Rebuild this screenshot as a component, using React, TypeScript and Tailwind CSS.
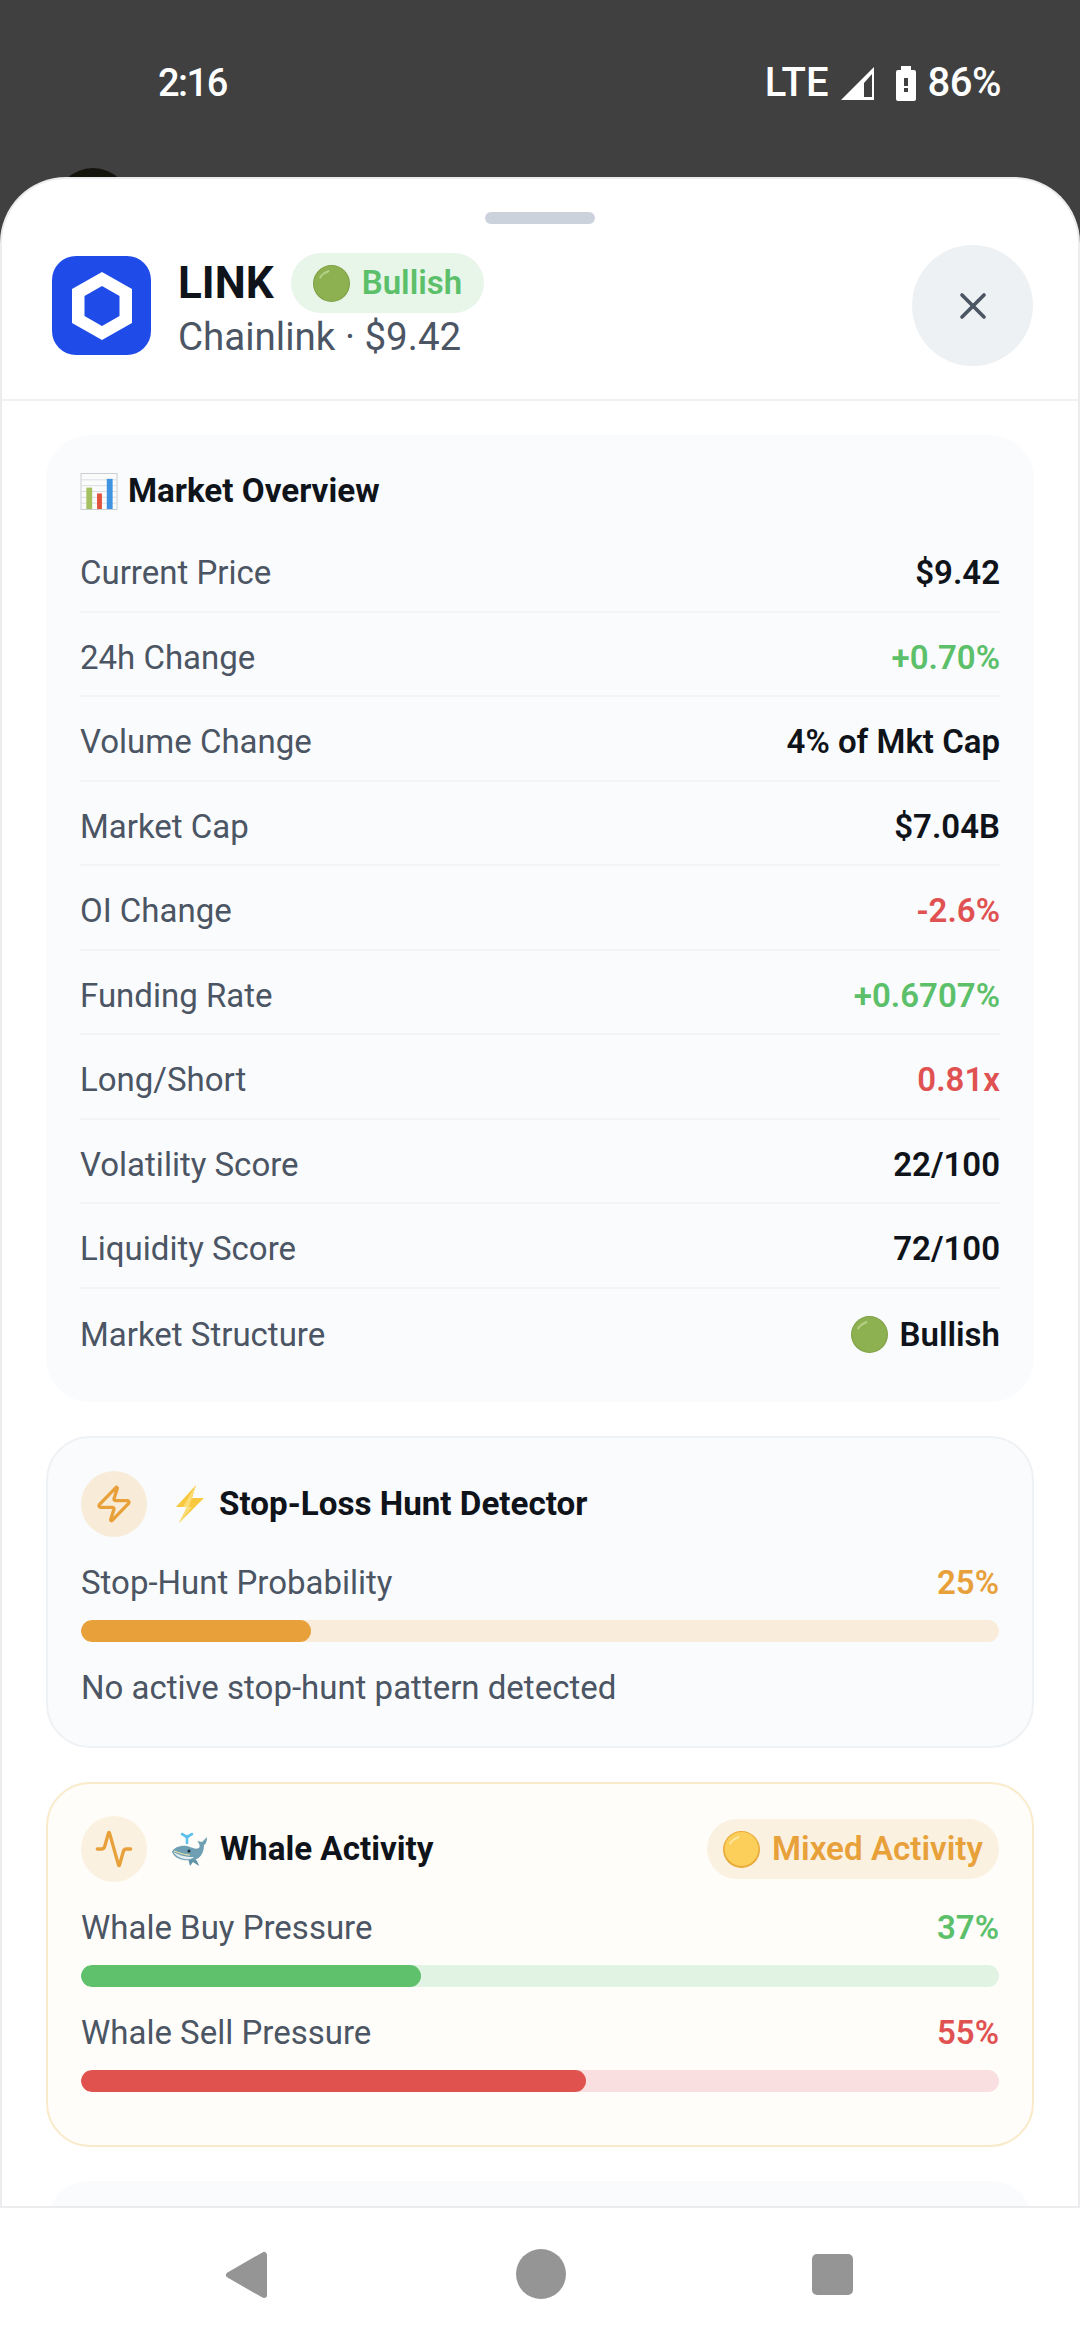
import { Activity, X, Zap } from "lucide-react";

const rows = [
  { label: "Current Price", value: "$9.42", color: "text-[#0f131a]" },
  { label: "24h Change", value: "+0.70%", color: "text-[#5cc06b]" },
  { label: "Volume Change", value: "4% of Mkt Cap", color: "text-[#0f131a]" },
  { label: "Market Cap", value: "$7.04B", color: "text-[#0f131a]" },
  { label: "OI Change", value: "-2.6%", color: "text-[#e05252]" },
  { label: "Funding Rate", value: "+0.6707%", color: "text-[#5cc06b]" },
  { label: "Long/Short", value: "0.81x", color: "text-[#e05252]" },
  { label: "Volatility Score", value: "22/100", color: "text-[#0f131a]" },
  { label: "Liquidity Score", value: "72/100", color: "text-[#0f131a]" },
];

function GreenDot() {
  return (
    <svg width="37" height="37" viewBox="0 0 36 36" className="shrink-0">
      <circle cx="18" cy="18" r="18" fill="#7f9f45" />
      <circle cx="18" cy="18" r="17" fill="#8db150" />
      <path d="M7 12c2-3 5-5 8-6" stroke="#b5cf86" strokeWidth="2" fill="none" strokeLinecap="round" />
    </svg>
  );
}

function YellowDot() {
  return (
    <svg width="37" height="37" viewBox="0 0 36 36" className="shrink-0">
      <circle cx="18" cy="18" r="18" fill="#e8a93a" />
      <circle cx="18" cy="17.5" r="16.5" fill="#fbcf5a" />
      <path d="M7 12c2-3 5-5 8-6" stroke="#fde59c" strokeWidth="2" fill="none" strokeLinecap="round" />
    </svg>
  );
}

function ChartEmoji() {
  return (
    <svg width="38" height="37" viewBox="0 0 38 38" className="shrink-0">
      <rect x="0.5" y="0.5" width="37" height="37" fill="#fbfbfb" stroke="#c9ced3" />
      <path d="M1 7h36M1 13h36M1 19h36M1 25h36M1 31h36" stroke="#d9dde1" strokeWidth="1" />
      <rect x="6" y="15" width="6" height="22" fill="#a5c15f" />
      <rect x="17" y="21" width="5" height="16" fill="#e0523c" />
      <rect x="27" y="6" width="6" height="31" fill="#3f93e0" />
    </svg>
  );
}

function BoltEmoji() {
  return (
    <svg width="30" height="38" viewBox="0 0 30 38" className="shrink-0">
      <path d="M21 0 1 22h11L4 38 29 13H17Z" fill="#f8c93e" />
      <path d="M21 0 8 22h4L4 38 17 22h-3Z" fill="#fbdd78" />
    </svg>
  );
}

function WhaleEmoji() {
  return (
    <svg width="38" height="38" viewBox="0 0 38 38" className="shrink-0">
      {/* spout */}
      <path d="M16 13V6M16 8c-1-2-3-3-5-4M16 8c1-2 3-3 5-4" stroke="#5cc1ec" strokeWidth="2.6" fill="none" strokeLinecap="round" />
      {/* fin */}
      <path d="M17 28l2 8 3-4 6 4c-1-4-3-7-6-9Z" fill="#5f93a8" />
      {/* body and tail */}
      <path d="M1 22C3 17 10 15 16 16c4 1 8 4 12 2 1-2 1-3-1-6l-1-1 5 1 5-5c0 4-1 7-3 8 0 9-5 15-12 15C12 31 4 29 1 22Z" fill="#6f9fb3" />
      {/* belly */}
      <path d="M2 22c6 3 12 5 21 5-4 4-15 3-21-5Z" fill="#e4eef0" />
      <path d="M3 21c6 2 10 4 16 4" stroke="#e9e0a8" strokeWidth="1.200" fill="none" />
      <circle cx="18" cy="21" r="1.500" fill="#1c2b33" />
    </svg>
  );
}

function ProgressRow({
  label,
  value,
  width,
  text,
  fill,
  track,
}: {
  label: string;
  value: string;
  width: string;
  text: string;
  fill: string;
  track: string;
}) {
  return (
    <div>
      <div className="flex h-[46px] items-center justify-between">
        <span className="text-[33px] text-[#4b5563]">{label}</span>
        <span className={`text-[33px] font-semibold ${text}`}>{value}</span>
      </div>
      <div className={`mt-[14px] h-[22px] overflow-hidden rounded-full ${track}`}>
        <div className={`h-full rounded-full ${width} ${fill}`} />
      </div>
    </div>
  );
}

export default function App() {
  return (
    <div className="relative flex h-[2340px] w-[1080px] flex-col overflow-hidden bg-[#404040] font-['Roboto',sans-serif]">
      {/* background coin peeking over the sheet */}
      <div className="absolute left-[55px] top-[168px] h-[76px] w-[76px] rounded-full bg-[#14140c]" />

      {/* Status bar */}
      <div className="relative flex h-[177px] shrink-0 items-start justify-between pl-[158px] pr-[79px] pt-[60px] text-white">
        <span className="text-[38px] font-medium leading-[46px] tracking-[-1.5px]">2:16</span>
        <div className="flex items-center">
          <span className="text-[40px] font-medium leading-[46px]">LTE</span>
          <svg width="34" height="35" viewBox="0 0 34 35" className="ml-[12px]">
            <path d="M33 1v33H0Z" fill="#fff" />
            <path d="M23 17l8-9v23h-8Z" fill="#404040" />
          </svg>
          <svg width="20" height="35" viewBox="0 0 20 35" className="ml-[21px]">
            <path d="M5 0h10v4h3a2 2 0 0 1 2 2v27a2 2 0 0 1-2 2H2a2 2 0 0 1-2-2V6a2 2 0 0 1 2-2h3Z" fill="#fff" />
            <path d="M8 12h4v8h-4ZM8 22h4v4h-4Z" fill="#404040" />
          </svg>
          <span className="ml-[12px] text-[40px] font-medium leading-[46px] tracking-[-0.5px]">86%</span>
        </div>
      </div>

      {/* Sheet */}
      <div className="relative flex min-h-0 flex-1 flex-col overflow-hidden rounded-t-[66px] border-x-2 border-t-2 border-[#ececee] bg-white">
        <div className="mx-auto mt-[33px] h-[12px] w-[110px] shrink-0 rounded-full bg-[#cbd2db]" />

        {/* Header */}
        <div className="flex h-[177px] shrink-0 items-start justify-between border-b-2 border-[#f0f1f3] pl-[50px] pr-[45px]">
          <div className="flex">
            <div className="mt-[32px] flex h-[99px] w-[99px] items-center justify-center rounded-[24px] bg-[#1f4ce8]">
              <svg width="60" height="68" viewBox="0 0 60 68">
                <path fillRule="evenodd" d="M30 0 60 17v34L30 68 0 51V17ZM30 14 12.500 24v20L30 54l17.500-10V24Z" fill="#fff" />
              </svg>
            </div>
            <div className="ml-[27px] mt-[29px]">
              <div className="flex items-center">
                <span className="text-[44px] font-bold leading-[60px] text-[#0f131a]">LINK</span>
                <span className="ml-[17px] flex h-[60px] items-center gap-[12px] rounded-full bg-[#e7f6e9] px-[22px] text-[33px] font-semibold text-[#5cc06b]">
                  <GreenDot />
                  Bullish
                </span>
              </div>
              <div className="text-[38.500px] leading-[48px] text-[#4b5563]">Chainlink · $9.42</div>
            </div>
          </div>
          <div className="mt-[21px] flex h-[121px] w-[121px] items-center justify-center rounded-full bg-[#eef1f4]">
            <X size={44} strokeWidth={2} className="text-[#4b5563]" />
          </div>
        </div>

        {/* Scroll content */}
        <div className="flex min-h-0 flex-1 flex-col gap-[34px] overflow-hidden px-[44px] pt-[34px]">
          <div className="shrink-0 rounded-[44px] bg-[#fafbfd] px-[34px] pb-[29px] pt-[33px]">
            <div className="flex h-[46px] items-center gap-[10px]">
              <ChartEmoji />
              <span className="text-[33.200px] font-bold text-[#0f131a]">Market Overview</span>
            </div>
            <div className="mt-[14px]">
              {rows.map((row) => (
                <div
                  key={row.label}
                  className="flex h-[84.500px] items-center justify-between border-b-2 border-[#f3f4f7] pt-[7px]"
                >
                  <span className="text-[33px] text-[#4b5563]">{row.label}</span>
                  <span className={`text-[33px] font-semibold ${row.color}`}>{row.value}</span>
                </div>
              ))}
              <div className="flex h-[84.500px] items-center justify-between pt-[7px]">
                <span className="text-[33px] text-[#4b5563]">Market Structure</span>
                <span className="flex items-center gap-[12px] text-[33px] font-semibold text-[#0f131a]">
                  <GreenDot />
                  Bullish
                </span>
              </div>
            </div>
          </div>

          <div className="shrink-0 rounded-[44px] border-2 border-[#eff2f5] bg-[#fafbfd] px-[33px] pb-[35px] pt-[33px]">
            <div className="flex items-center">
              <div className="flex h-[66px] w-[66px] items-center justify-center rounded-full bg-[#f8ecd9]">
                <Zap size={40} strokeWidth={2} className="text-[#e8a13a]" />
              </div>
              <div className="ml-[28px] flex items-center gap-[14px]">
                <BoltEmoji />
                <span className="text-[33.200px] font-bold text-[#0f131a]">Stop-Loss Hunt Detector</span>
              </div>
            </div>
            <div className="mt-[23px]">
              <ProgressRow
                label="Stop-Hunt Probability"
                value="25%"
                width="w-1/4"
                text="text-[#e8a13a]"
                fill="bg-[#e8a13a]"
                track="bg-[#f9ecdb]"
              />
            </div>
            <div className="mt-[23px] text-[33px] leading-[46px] text-[#4b5563]">No active stop-hunt pattern detected</div>
          </div>

          <div className="shrink-0 rounded-[44px] border-2 border-[#f9eaca] bg-[#fffdf9] px-[33px] pb-[53px] pt-[32px]">
            <div className="flex items-center justify-between">
              <div className="flex items-center">
                <div className="flex h-[66px] w-[66px] items-center justify-center rounded-full bg-[#fbf1e0]">
                  <Activity size={40} strokeWidth={2} className="text-[#e8a13a]" />
                </div>
                <div className="ml-[24px] flex items-center gap-[11px]">
                  <WhaleEmoji />
                  <span className="text-[33.200px] font-bold text-[#0f131a]">Whale Activity</span>
                </div>
              </div>
              <span className="flex h-[60px] items-center gap-[12px] rounded-full bg-[#fbf1e0] px-[16px] text-[33.200px] font-semibold text-[#e8a13a]">
                <YellowDot />
                Mixed Activity
              </span>
            </div>
            <div className="mt-[23px] flex flex-col gap-[23px]">
              <ProgressRow
                label="Whale Buy Pressure"
                value="37%"
                width="w-[37%]"
                text="text-[#5cc06b]"
                fill="bg-[#5fc16c]"
                track="bg-[#e1f3e3]"
              />
              <ProgressRow
                label="Whale Sell Pressure"
                value="55%"
                width="w-[55%]"
                text="text-[#e05252]"
                fill="bg-[#e0524e]"
                track="bg-[#f9dfdf]"
              />
            </div>
          </div>

          <div className="h-[120px] shrink-0 rounded-[44px] bg-[#f9fbfd]" />
        </div>
      </div>

      {/* Nav bar */}
      <div className="relative flex h-[134px] shrink-0 items-center border-t-2 border-[#ececee] bg-white">
        <svg width="44" height="48" viewBox="0 0 44 48" className="absolute left-[225px] top-[43px]">
          <path d="M39 4v40L4 24Z" fill="#959595" stroke="#959595" strokeWidth="6" strokeLinejoin="round" />
        </svg>
        <div className="absolute left-[516px] top-[41px] h-[50px] w-[50px] rounded-full bg-[#959595]" />
        <div className="absolute left-[812px] top-[46px] h-[41px] w-[41px] rounded-[5px] bg-[#959595]" />
      </div>
    </div>
  );
}
